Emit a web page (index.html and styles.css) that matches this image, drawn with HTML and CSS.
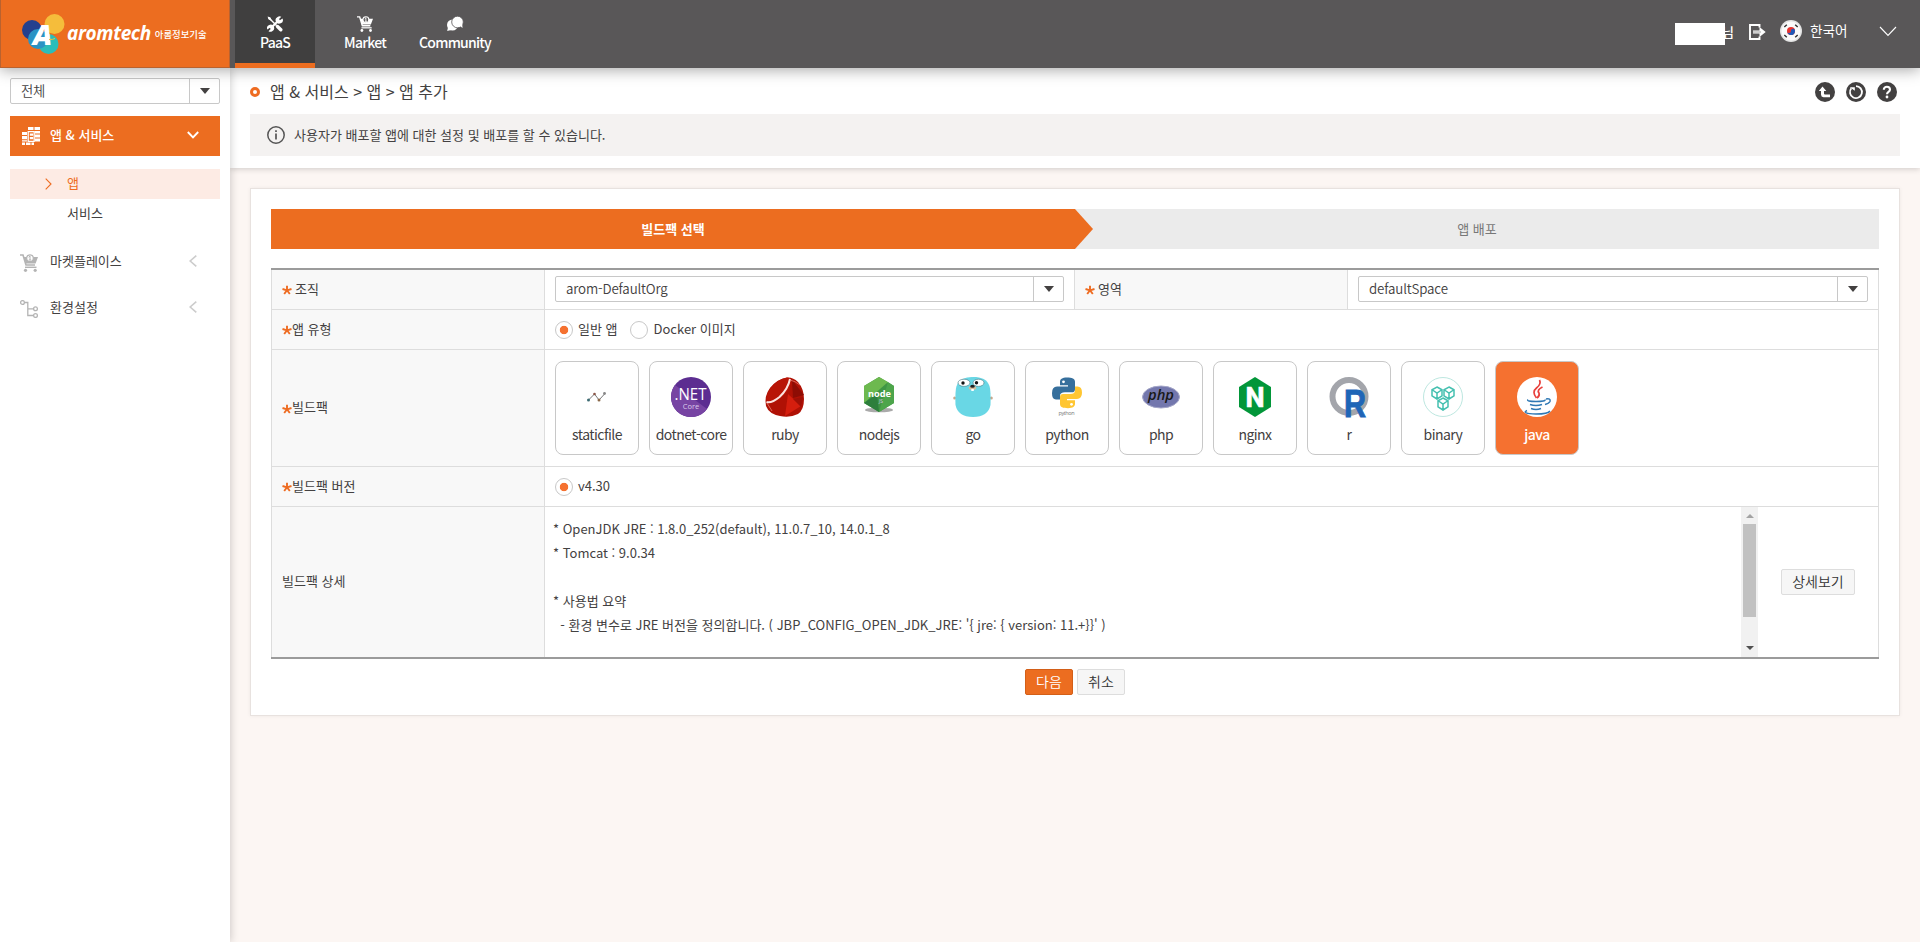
FILE: index.html
```html
<!DOCTYPE html>
<html lang="ko">
<head>
<meta charset="utf-8">
<title>PaaS - 앱 추가</title>
<link rel="stylesheet" href="styles.css">
</head>
<body>
<svg class="defs" width="0" height="0">
  <symbol id="cart" viewBox="0 0 18 18">
    <path d="M0 1h3l3 10h9" fill="none" stroke="currentColor" stroke-width="1.6"/>
    <path d="M3.6 3h3.2c-.6 3 1 4.800 3.200 4.800s3.800-1.800 3.200-4.800H18l-2.400 6.600H5.800z" fill="currentColor"/>
    <circle cx="10" cy="4.200" r="3.300" fill="none" stroke="currentColor" stroke-width="1.200"/>
    <path d="M10 2v4M8.700 3.200L10 2M8.800 6h2.400" fill="none" stroke="currentColor" stroke-width="1"/>
    <path d="M5 13.300h11.500" stroke="currentColor" stroke-width="1.400"/>
    <circle cx="5.500" cy="16.300" r="1.600" fill="currentColor"/><circle cx="15.200" cy="16.300" r="1.600" fill="currentColor"/>
  </symbol>
  <symbol id="star" viewBox="0 0 10 10"><path d="M5 5.300V.7M5 5.300L.5 4M5 5.300L9.500 4M5 5.300L2.200 9M5 5.300L7.800 9" stroke="#ee6c22" stroke-width="1.900" fill="none"/></symbol>
</svg>
<header class="header">
  <a class="logo">
    <svg width="44" height="42" viewBox="0 0 44 42">
      <circle cx="32.500" cy="10" r="10" fill="#f5bd3b"/>
      <circle cx="10" cy="16" r="10" fill="#24408e"/>
      <circle cx="26.500" cy="30" r="10" fill="#2bbdb9"/>
      <circle cx="16" cy="25" r="10" fill="#2a93c4"/>
      <text x="20.500" y="30.500" text-anchor="middle" class="mark" font-size="29">A</text>
      <path d="M27 25.500q4 .2 6-1" stroke="#f5bd3b" fill="none"/>
    </svg>
    <span class="logo-name">aromtech</span><span class="logo-sub">아롬정보기술</span>
  </a>
  <nav class="tabs">
    <a class="tab tab-active">
      <svg width="16" height="16" viewBox="0 0 16 16"><path d="M4.500 11.500l7-7" stroke="#fff" stroke-width="2.200"/><path d="M1.500 1.500l8 8" stroke="#fff" stroke-width="1.500"/><path d="M.6.600L3.500 1.600 4.600 4 3.600 4.600 1.400 3.300z" fill="#fff"/><path d="M10.500 10.500l3.300 3.300" stroke="#fff" stroke-width="3.400" stroke-linecap="round"/><path d="M14.300.8L12 3.100l.9 1.200 2.600-1.700a3.600 3.600 0 1 1-4.900-1.700 3.500 3.500 0 0 1 3.700-.1zM1.500 15.300l2.200-2.300-.9-1.200-2.400 1.700a3.500 3.500 0 1 1 4.800 1.700 3.500 3.500 0 0 1-3.700.1z" fill="#fff"/></svg>
      <span>PaaS</span>
    </a>
    <a class="tab"><svg width="16" height="16"><use href="#cart"/></svg><span>Market</span></a>
    <a class="tab">
      <svg width="18" height="16" viewBox="0 0 18 16"><circle cx="6.500" cy="9" r="5.500" fill="#fff"/><path d="M2 11l-.8 4 4-1z" fill="#fff"/><circle cx="11.500" cy="6" r="5.800" fill="#fff" stroke="#595758" stroke-width=".8"/><path d="M14 10l2.500 2-.3-4z" fill="#fff"/></svg>
      <span>Community</span>
    </a>
  </nav>
  <div class="user">
    <span class="mask"></span><span class="nim">님</span>
    <svg class="logout" width="17" height="16" viewBox="0 0 17 16"><path d="M10.500 3.500V1H1v14h9.500v-2.500" fill="none" stroke="#fff" stroke-width="1.900"/><path d="M4 6.500h6.500V3L16.700 8l-6.200 5V9.500H4z" fill="#fff"/><path d="M4 8h8" stroke="#888" stroke-width=".8"/></svg>
    <svg class="flag" width="22" height="22" viewBox="0 0 22 22"><circle cx="11" cy="11" r="11" fill="#e4e4e4"/><circle cx="11" cy="11" r="9.500" fill="#fafafa"/><circle cx="11" cy="11" r="4" fill="#e8322e"/><path d="M7 11.200a2 2 0 0 0 4-.2 2 2 0 0 1 3.900-.8A4 4 0 1 1 7 11.200z" fill="#1d58b8"/><path d="M4.300 7l2.500-2.300M15.200 4.700L17.700 7M4.300 15l2.500 2.300M15.200 17.300l2.500-2.300" stroke="#333" stroke-width="1.500"/></svg>
    <span class="lang">한국어</span>
    <svg class="lang-arrow" width="18" height="11" viewBox="0 0 18 11"><path d="M1 1l8 8.500L17 1" fill="none" stroke="#fff" stroke-width="1.100"/></svg>
  </div>
</header>
<div class="body">
  <aside class="sidebar">
    <div class="select"><span class="select-text">전체</span><span class="select-arrow"><i></i></span></div>
    <a class="menu menu-active">
      <svg class="menu-icon" width="18" height="18" viewBox="0 0 18 18" fill="#fff"><path d="M0 5h5v3H0zM0 9h5v3.200H0zM0 13.200h5v1.300H0zM0 15.500h3V18H0zM4 15.500h4.500V18H4zM6 0h5.500v3H6zM12.500 0H18v3h-5.500zM13 4h5v2.500h-5zM13 7.500h5v3h-5zM13 11.500h5v3h-5zM9.500 15.500H12V18H9.500zM7.800 6.500h3.400v2.300H7.800zM7.800 10h3.400v2.300H7.800z"/><path d="M6.200 4v10.300h6V4.700H6.200" fill="none" stroke="#fff" stroke-width="1.300"/></svg>
      <span>앱 &amp; 서비스</span>
      <svg class="menu-chev" width="12" height="8" viewBox="0 0 12 8"><path d="M.8 1L6 6.300 11.200 1" fill="none" stroke="#fff" stroke-width="1.900"/></svg>
    </a>
    <div class="submenu">
      <a class="sub sub-active"><svg width="7" height="12" viewBox="0 0 7 12"><path d="M.7.7L6 6 .7 11.300" fill="none" stroke="#ee6c22" stroke-width="1.100"/></svg><span>앱</span></a>
      <a class="sub"><span>서비스</span></a>
    </div>
    <a class="menu">
      <svg class="menu-icon shift" width="18" height="18"><use href="#cart"/></svg>
      <span>마켓플레이스</span>
      <svg class="menu-chev" width="8" height="12" viewBox="0 0 8 12"><path d="M7.300.6L1.200 6l6.100 5.400" fill="none" stroke="#ccc" stroke-width="1.600"/></svg>
    </a>
    <a class="menu">
      <svg class="menu-icon shift" width="18" height="18" viewBox="0 0 18 18" fill="none" stroke="#b4b4b4" stroke-width="1.300"><circle cx="2.500" cy="2.500" r="1.900"/><circle cx="15.500" cy="8.800" r="1.900"/><circle cx="15.500" cy="15.500" r="1.900"/><path d="M4.500 2.500h3.300v13h5.700M7.800 8.800h5.700"/></svg>
      <span>환경설정</span>
      <svg class="menu-chev" width="8" height="12" viewBox="0 0 8 12"><path d="M7.300.6L1.200 6l6.100 5.400" fill="none" stroke="#ccc" stroke-width="1.600"/></svg>
    </a>
  </aside>
  <main class="main">
    <section class="page-head">
      <div class="title-row">
        <i class="bullet"></i><h1>앱 &amp; 서비스 &gt; 앱 &gt; 앱 추가</h1>
        <div class="tools">
          <svg width="20" height="20" viewBox="0 0 20 20"><circle cx="10" cy="10" r="10" fill="#434141"/><path d="M7.500 4.500L11.300 9H9v2.500q0 1 1 1h5v2.700H8.500Q6 15 6 12.500V9H3.800z" fill="#fff"/></svg>
          <svg width="20" height="20" viewBox="0 0 20 20"><circle cx="10" cy="10" r="10" fill="#434141"/><path d="M10 4.100A6 6 0 1 1 5.300 6.300" fill="none" stroke="#fff" stroke-width="1.800"/><path d="M3.800 5.200h5v3.600z" fill="#fff"/></svg>
          <svg width="20" height="20" viewBox="0 0 20 20"><circle cx="10" cy="10" r="10" fill="#434141"/><path d="M6.800 7.700C6.800 3.800 13 3.900 13 7.600c0 2.400-3 2.200-3 4.600" fill="none" stroke="#fff" stroke-width="2.100"/><circle cx="10" cy="15" r="1.400" fill="#fff"/></svg>
        </div>
      </div>
      <div class="notice">
        <svg width="18" height="18" viewBox="0 0 18 18"><circle cx="9" cy="9" r="8.200" fill="none" stroke="#555" stroke-width="1.500"/><path d="M9 7.500v6M9 4.300v1.800" stroke="#555" stroke-width="1.700"/></svg>
        <span>사용자가 배포할 앱에 대한 설정 및 배포를 할 수 있습니다.</span>
      </div>
    </section>
    <section class="card">
      <div class="steps">
        <div class="step step-on">빌드팩 선택<svg class="step-arrow" width="19" height="40" viewBox="0 0 19 40"><path d="M0 0l18 20L0 40z" fill="#ec6d20"/></svg></div>
        <div class="step">앱 배포</div>
      </div>
      <div class="table">
        <div class="row r40">
          <div class="th"><svg class="star" width="10" height="10"><use href="#star"/></svg><span class="sp">조직</span></div>
          <div class="td half"><div class="select"><span class="select-text">arom-DefaultOrg</span><span class="select-arrow"><i></i></span></div></div>
          <div class="th th2"><svg class="star" width="10" height="10"><use href="#star"/></svg><span class="sp">영역</span></div>
          <div class="td half last"><div class="select"><span class="select-text">defaultSpace</span><span class="select-arrow"><i></i></span></div></div>
        </div>
        <div class="row r40">
          <div class="th"><svg class="star" width="10" height="10"><use href="#star"/></svg><span>앱 유형</span></div>
          <div class="td"><i class="radio on"></i><span class="rl">일반 앱</span><i class="radio"></i><span class="rl rl-wide">Docker 이미지</span></div>
        </div>
        <div class="row r117">
          <div class="th"><svg class="star" width="10" height="10"><use href="#star"/></svg><span>빌드팩</span></div>
          <div class="td packs">
            <div class="pack"><svg width="40" height="40" viewBox="0 0 40 40"><path d="M11.500 23l6-6 4.500 6 6-6.500" fill="none" stroke="#777" stroke-width="1"/><circle cx="11.500" cy="23" r="1.500" fill="#3d6b73"/><circle cx="17.500" cy="17" r="1.300" fill="#8a5547"/><circle cx="22" cy="23" r="1.500" fill="#8a6848"/><circle cx="27.500" cy="16.500" r="1.400" fill="#888"/></svg><span>staticfile</span></div>
            <div class="pack"><svg width="40" height="40" viewBox="0 0 40 40"><circle cx="20" cy="20" r="20" fill="#5c2d91"/><path d="M4 8L36 32A20 20 0 0 1 4 8z" fill="#7744a3"/><text x="19.500" y="23" text-anchor="middle" class="net" font-size="15.500" textLength="32" lengthAdjust="spacingAndGlyphs">.NET</text><text x="20" y="31.500" text-anchor="middle" class="net faint" font-size="7.500">Core</text></svg><span>dotnet-core</span></div>
            <div class="pack"><svg width="40" height="40" viewBox="0 0 40 40"><path d="M22 .5Q28 0 33 5q6 7 6 17 0 11-6 15-8 4-18 2Q4 37 1 29-1 19 5 11 12 2 22 .5z" fill="#b01105"/><path d="M22 .5Q27 1 26 6q-2 9-9 14T2 25Q0 18 6 10.500 13 2 22 .5z" fill="#b81507"/><path d="M27 3l12 15-11 3z" fill="#8d0c04"/><path d="M23 17l13 12-16 10z" fill="#d51e0e"/><path d="M38 20l-2 10-8-8z" fill="#9f0f06"/><path d="M1.500 25q5 1.500 13-5Q23 12 25 2" fill="none" stroke="#fbe3e0" stroke-width="2"/><path d="M25 3q5 1 10 5M2 26l5 8" stroke="#e87a6c" stroke-width=".8" fill="none"/></svg><span>ruby</span></div>
            <div class="pack"><svg width="40" height="40" viewBox="0 0 40 40"><ellipse cx="20" cy="33" rx="14" ry="2.300" fill="#aaa"/><path d="M20 0l15 9v17l-15 9-15-9V9z" fill="#3f9645"/><path d="M20 0L5 9v17L29 5z" fill="#6db94f"/><path d="M5 26L18 17l2 18z" fill="#2d7f3c"/><path d="M29 5l6 4v17L20 35z" fill="#4da54b"/><text x="20.500" y="19.500" text-anchor="middle" class="net heavy" font-size="9" textLength="23" lengthAdjust="spacingAndGlyphs">node</text><text x="22" y="25.500" text-anchor="middle" class="net faint" font-size="5">JS</text></svg><span>nodejs</span></div>
            <div class="pack"><svg width="40" height="40" viewBox="0 0 40 40"><circle cx="1.700" cy="21" r="1.500" fill="#c7a88c"/><circle cx="38.300" cy="21" r="1.500" fill="#c7a88c"/><path d="M20 0C29 0 34 2.500 36.500 9q1.500 5 1 19Q35 40 20 40T2.500 28q-.5-14 1-19Q6 2.500 20 0z" fill="#69d7e5"/><path d="M4 8Q7 0 20 0l-4 6z" fill="#69d7e5"/><ellipse cx="11" cy="5.800" rx="6" ry="3.600" fill="#fff" stroke="#447680" stroke-width=".6"/><ellipse cx="25.500" cy="5.800" rx="5.500" ry="3.600" fill="#fff" stroke="#447680" stroke-width=".6"/><circle cx="10" cy="6" r="1.700" fill="#111"/><circle cx="23.500" cy="5.800" r="1.700" fill="#111"/><ellipse cx="19.500" cy="11" rx="3.800" ry="1.900" fill="#d6bd9d"/><ellipse cx="19.500" cy="9.300" rx="2.300" ry="1.500" fill="#222"/><path d="M18.300 12h2.500v2h-2.500z" fill="#fff"/></svg><span>go</span></div>
            <div class="pack"><svg width="40" height="40" viewBox="0 0 40 40"><g transform="translate(0 -.5) scale(1 .88)"><path d="M20 1c-5 0-7 2-7 5v4h8v1.500H10q-5 0-5 7.500t4.500 7H13v-4q0-4 5-4h7q3 0 3-3.500V6c0-4-3-5-8-5z" fill="#366f9c"/><path d="M21 36c5 0 7-2 7-5v-4h-8v-1.500h10q5 0 5-7t-4.500-7H28v4.500q0 4-5 4h-7q-3 0-3 3.500V31c0 4 3 5 8 5z" fill="#ffc632"/></g><circle cx="16.500" cy="4.800" r="1.400" fill="#fff"/><circle cx="24.500" cy="27.300" r="1.400" fill="#fff"/><text x="19.500" y="37.500" text-anchor="middle" class="pyt" font-size="5.500" textLength="16">python</text></svg><span>python</span></div>
            <div class="pack"><svg width="40" height="40" viewBox="0 0 40 40"><ellipse cx="20" cy="20" rx="18.500" ry="11" fill="#7377ad" stroke="#a4a6c8"/><text x="20" y="23" text-anchor="middle" class="phpt" font-size="14" textLength="26" lengthAdjust="spacingAndGlyphs">php</text></svg><span>php</span></div>
            <div class="pack"><svg width="40" height="40" viewBox="0 0 40 40"><path d="M20 0l16 10v20L20 40 4 30V10z" fill="#029639"/><text x="20" y="29.500" text-anchor="middle" class="ngx" font-size="27">N</text></svg><span>nginx</span></div>
            <div class="pack"><svg width="40" height="40" viewBox="0 0 40 40"><ellipse cx="20" cy="19.500" rx="16.500" ry="16.500" fill="none" stroke="#a3a5ab" stroke-width="6"/><text x="26" y="39.500" text-anchor="middle" class="rt" font-size="38" textLength="22" lengthAdjust="spacingAndGlyphs">R</text></svg><span>r</span></div>
            <div class="pack"><svg width="40" height="40" viewBox="0 0 40 40"><circle cx="20" cy="20" r="19.500" fill="#fff" stroke="#bde7e0"/><g fill="none" stroke="#45c0b0" stroke-width="1.500"><g id="cube"><path d="M14 10l5 2.800v6L14 22l-5-3.200v-6zM9.500 13l4.500 3 4.500-3M14 16v6"/></g><use href="#cube" x="12"/><use href="#cube" x="6" y="11"/></g></svg><span>binary</span></div>
            <div class="pack pack-on"><svg width="40" height="40" viewBox="0 0 40 40"><circle cx="20" cy="20" r="20" fill="#fff"/><path d="M22.500 3q2 4-3 8t0 10M25.500 10q-6 3-3.500 6 1 3-2 5" fill="none" stroke="#e8403c" stroke-width="1.700"/><g fill="none" stroke="#2f78b4" stroke-width="1.500"><path d="M11 22.500q-2 2 8 2t9-2M13 27.500q6 2 12 0M14 31.500q5 2 10 0M10 33.500q-6 3 9 3.500 12 0 14-3M29 22q5-1 4 2.500-1 2-5 3"/></g></svg><span>java</span></div>
          </div>
        </div>
        <div class="row r40">
          <div class="th"><svg class="star" width="10" height="10"><use href="#star"/></svg><span>빌드팩 버전</span></div>
          <div class="td"><i class="radio on"></i><span class="rl">v4.30</span></div>
        </div>
        <div class="row r150">
          <div class="th"><span>빌드팩 상세</span></div>
          <div class="td detail">
            <pre class="info">* OpenJDK JRE : 1.8.0_252(default), 11.0.7_10, 14.0.1_8
* Tomcat : 9.0.34

* 사용법 요약
  - 환경 변수로 JRE 버전을 정의합니다. ( JBP_CONFIG_OPEN_JDK_JRE: '{ jre: { version: 11.+}}' )</pre>
            <div class="scroll"><i class="up"></i><i class="thumb"></i><i class="down"></i></div>
            <div class="more"><button class="btn btn-more">상세보기</button></div>
          </div>
        </div>
      </div>
      <div class="actions"><button class="btn btn-main">다음</button><button class="btn">취소</button></div>
    </section>
  </main>
</div>
</body>
</html>
```
FILE: styles.css
```css
* { box-sizing: border-box; }
body {
  margin: 0;
  height: 942px;
  overflow: hidden;
  display: flex;
  flex-direction: column;
  background: #fcf6f3;
  color: #434141;
  font: 13px/20px "Noto Sans CJK KR", "Noto Sans", sans-serif;
}
svg { display: block; flex: none; }
.defs { position: absolute; }
h1 { margin: 0; font-size: 16px; font-weight: 400; line-height: 24px; }

.header {
  position: relative;
  z-index: 3;
  display: flex;
  flex: none;
  height: 68px;
  background: #595758;
  color: #fff;
  box-shadow: 0 2px 14px rgba(0, 0, 0, .35);
}
.logo {
  display: flex;
  width: 230px;
  padding: 14px 0 0 21px;
  background: #ec6d20;
  border: 1px solid #b9622f;
  border-top: 0;
}
.logo-name {
  margin: 6px 0 0 1px;
  font: italic 700 19px/26px "Open Sans", sans-serif;
  letter-spacing: -.35px;
}
.logo-sub { margin: 10px 0 0 4px; font-size: 9.400px; font-weight: 500; white-space: nowrap; }
.mark { font-family: "Open Sans", sans-serif; font-style: italic; font-weight: 800; fill: #fff; }
.tabs { display: flex; margin-left: 5px; gap: 10px; }
.tab {
  width: 80px;
  display: flex;
  flex-direction: column;
  align-items: center;
  padding-top: 16px;
  font-size: 14px;
  font-weight: 500;
  letter-spacing: -.75px;
}
.tab-active { background: #403f3f; border-bottom: 5px solid #ec6d20; }
.user { display: flex; margin-left: auto; width: 245px; font-size: 13px; }
.mask { position: relative; z-index: 1; flex: none; width: 50px; height: 22px; margin-top: 23px; background: #fff; }
.nim { flex: none; width: 13px; margin: 22px 0 0 -3px; font-weight: 500; }
.logout { margin: 24px 0 0 14px; }
.flag { margin: 20px 0 0 14px; }
.lang { margin: 20px 0 0 8px; width: 42px; font-size: 13.600px; white-space: nowrap; }
.lang-arrow { margin: 26px 0 0 27px; }

.body { display: flex; flex: 1; }
.sidebar {
  position: relative;
  z-index: 2;
  width: 230px;
  padding: 10px;
  background: #fff;
  box-shadow: 1px 0 8px rgba(0, 0, 0, .18);
}
.select {
  display: flex;
  width: 100%;
  height: 26px;
  background: #fff;
  border: 1px solid #c8c8c8;
  border-radius: 2px;
}
.select-text { flex: 1; padding-left: 10px; font-size: 13.333px; letter-spacing: -.15px; line-height: 24px; font-weight: 350; }
.select-arrow {
  width: 30px;
  display: flex;
  justify-content: center;
  padding: 9px 0 0 1px;
  border-left: 1px solid #c8c8c8;
}
.select-arrow i { width: 0; height: 0; border: 5px solid transparent; border-top: 6px solid #434141; border-bottom: 0; }
.menu { display: flex; align-items: center; height: 40px; margin-bottom: 6px; padding: 0 23px 0 12px; }
.menu span { margin: -2px 0 0 10px; }
.menu-icon { color: #b4b4b4; }
.shift { margin: 1px 2px 0 -2px; }
.menu-chev { margin: -2px 0 0 auto; }
.menu-active { margin: 12px 0 13px; padding-right: 21px; background: #ec6d20; color: #fff; font-weight: 500; }
.submenu { margin-bottom: 13px; }
.sub { display: flex; align-items: center; height: 30px; padding-left: 57px; }
.sub span { margin-top: -2px; }
.sub-active { padding-left: 35px; gap: 15px; background: #fdebe4; color: #ee6c22; }

.main { flex: 1; }
.page-head {
  height: 100px;
  padding: 12px 20px 0;
  background: #fff;
  box-shadow: 0 1px 6px rgba(0, 0, 0, .18);
}
.title-row { display: flex; align-items: center; height: 24px; }
.bullet { width: 10px; height: 10px; border: 3px solid #ee6c22; border-radius: 50%; }
.title-row h1 { margin: -2px 0 0 10px; }
.tools { display: flex; gap: 11px; margin: 0 3px 0 auto; }
.notice {
  display: flex;
  align-items: center;
  height: 42px;
  margin-top: 10px;
  padding-left: 17px;
  background: #f4f2f1;
}
.notice span { margin: -1px 0 0 9px; }

.card {
  height: 528px;
  margin: 20px;
  padding: 20px;
  background: #fff;
  border: 1px solid #e8e2df;
  box-shadow: 0 0 4px rgba(0, 0, 0, .06);
}
.steps { display: flex; height: 40px; margin-bottom: 19px; }
.step {
  position: relative;
  flex: 1;
  text-align: center;
  line-height: 39px;
  background: #ebebeb;
  color: #777;
}
.step-on { background: #ec6d20; color: #fff; font-weight: 700; }
.step-arrow { position: absolute; left: 100%; top: 0; z-index: 1; }

.table { border: solid #9b9b9b; border-width: 2px 0; }
.row { display: flex; border: 1px solid #ddd; border-top: 0; }
.row:last-child { border-bottom: 0; }
.r40 { height: 40px; }
.r117 { height: 117px; }
.r150 { height: 150px; }
.th {
  display: flex;
  align-items: center;
  width: 273px;
  padding: 0 0 2px 10px;
  background: #f8f8f8;
  border-right: 1px solid #ddd;
}
.star { margin-top: 3px; }
.sp { margin-left: 3px; }
.td { display: flex; align-items: center; flex: 1; padding: 0 10px; }
.half { flex: none; width: 529px; }
.half .select { margin-top: -1px; }
.th2 { width: 274px; border-left: 1px solid #ddd; }
.last { flex: 1; width: auto; }
.radio {
  width: 18px;
  height: 18px;
  margin-top: 1px;
  border: 1px solid #c8c8c8;
  border-radius: 50%;
}
.on { background: radial-gradient(circle, #f57130 3.800px, #fff 4.600px); }
.rl { margin: -2px 12px 0 5px; }
.rl-wide { margin-left: 6px; }
.packs { gap: 10px; }
.pack {
  width: 84px;
  height: 94px;
  display: flex;
  flex-direction: column;
  align-items: center;
  padding-top: 15px;
  border: 1px solid #c8c8c8;
  border-radius: 8px;
  white-space: nowrap;
  font-size: 14px;
  letter-spacing: -.55px;
}
.pack svg { margin-bottom: 7px; overflow: visible; letter-spacing: 0; }
.pack-on { background: #f57130; color: #fff; font-weight: 500; }
.net { font-family: "Open Sans", sans-serif; fill: #fff; }
.faint { fill: #d9c8ea; }
.heavy { font-weight: 700; }
.pyt { font-family: "Open Sans", sans-serif; fill: #777; }
.phpt { font-family: "Open Sans", sans-serif; font-style: italic; font-weight: 600; fill: #191919; }
.ngx { font-family: Roboto, sans-serif; font-weight: 700; fill: #fff; stroke: #fff; stroke-width: .6; }
.rt { font-family: "Liberation Sans", sans-serif; font-weight: 700; fill: #1f65b7; stroke: #1f65b7; stroke-width: 1; }
.detail { padding: 0; align-items: stretch; }
.info { flex: 1; margin: 0; padding: 10px 8px; font: 13px/24px "Noto Sans CJK KR", sans-serif; }
.scroll {
  width: 17px;
  display: flex;
  flex-direction: column;
  align-items: center;
  background: #f1f1f1;
}
.up, .down { width: 0; height: 0; border: 4px solid transparent; }
.up { margin-top: 7px; border-top: 0; border-bottom-color: #a3a3a3; }
.thumb { width: 13px; height: 93px; margin-top: 6px; background: #c1c1c1; }
.down { margin-top: 29px; border-bottom: 0; border-top-color: #505050; }
.more { width: 120px; display: flex; align-items: center; justify-content: center; }
.btn {
  width: 48px;
  height: 26px;
  padding: 0 0 2px;
  border: 1px solid #ddd;
  border-radius: 2px;
  background: #f6f6f6;
  color: #333;
  font: 350 14px/22px "Noto Sans CJK KR", sans-serif;
}
.btn-more { width: 74px; }
.btn-main { background: #ec6d20; border-color: #d35f18; color: #fff; }
.actions { display: flex; justify-content: center; gap: 4px; margin-top: 10px; }
```
